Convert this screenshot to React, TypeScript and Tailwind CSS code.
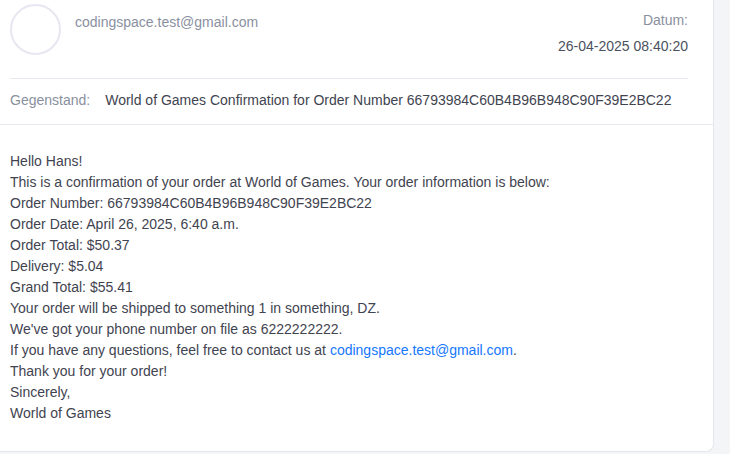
import React from "react";

export default function App() {
  const lines = [
    "Hello Hans!",
    "This is a confirmation of your order at World of Games. Your order information is below:",
    "Order Number: 66793984C60B4B96B948C90F39E2BC22",
    "Order Date: April 26, 2025, 6:40 a.m.",
    "Order Total: $50.37",
    "Delivery: $5.04",
    "Grand Total: $55.41",
    "Your order will be shipped to something 1 in something, DZ.",
    "We've got your phone number on file as 6222222222.",
  ];
  const tail = ["Thank you for your order!", "Sincerely,", "World of Games"];
  return (
    <div
      className="w-[730px] h-[454px] bg-[#f4f5f7] overflow-hidden text-[14px] leading-[21px]"
      style={{ fontFamily: '"Liberation Sans", Arial, sans-serif' }}
    >
      <div className="w-[714px] bg-white border-r border-b border-[#e4e6ec] rounded-br-[8px]">
        <div className="pl-[10px] pr-[25px]">
          <div className="flex items-start pt-[4px] pb-[21px]">
            <div className="w-[51px] h-[51px] rounded-full border-2 border-[#e6e7f0] shrink-0" />
            <div className="ml-[14px] mt-[8px] text-[#8a90a0]">codingspace.test@gmail.com</div>
            <div className="ml-auto mt-[6px] flex flex-col items-end gap-[5px]">
              <div className="text-[#8a90a0]">Datum:</div>
              <div className="text-[#4b5160]">26-04-2025 08:40:20</div>
            </div>
          </div>
          <div className="border-t border-[#e8e9ef]" />
          <div className="flex pt-[11px] pb-[13px]">
            <span className="text-[#8a90a0]">Gegenstand:</span>
            <span className="ml-[15px] text-[#3f4450]">
              World of Games Confirmation for Order Number 66793984C60B4B96B948C90F39E2BC22
            </span>
          </div>
        </div>
        <div className="border-t border-[#e8e9ef]" />
        <div className="px-[10px] pt-[26px] pb-[27px] text-[#3f4450]">
          {lines.map((l) => (
            <div key={l}>{l}</div>
          ))}
          <div>
            If you have any questions, feel free to contact us at{" "}
            <span className="text-[#1677ff]">codingspace.test@gmail.com</span>.
          </div>
          {tail.map((l) => (
            <div key={l}>{l}</div>
          ))}
        </div>
      </div>
    </div>
  );
}
